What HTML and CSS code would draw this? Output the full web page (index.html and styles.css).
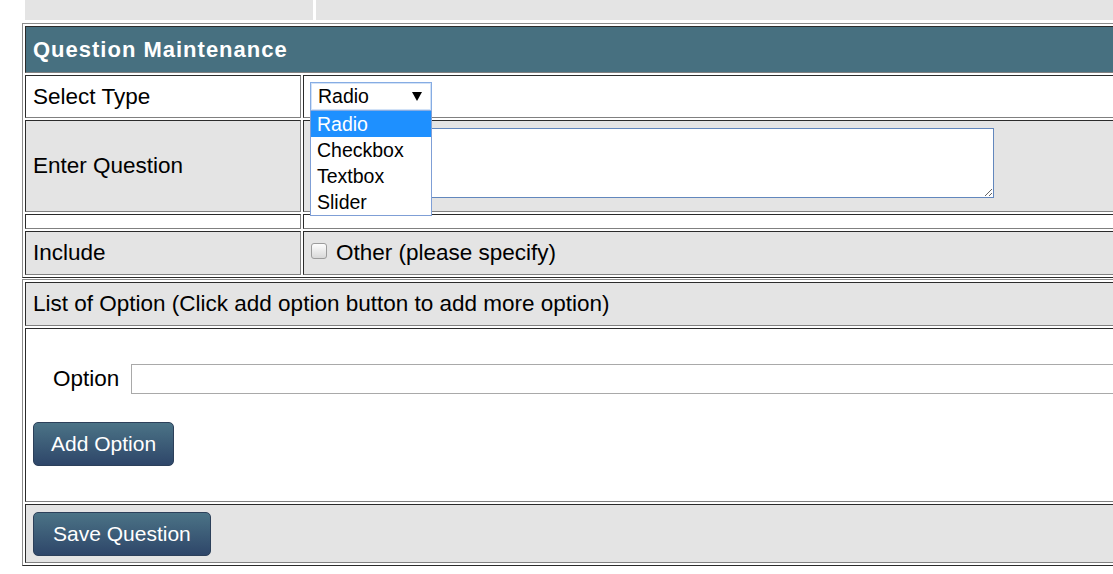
FILE: index.html
```html
<!DOCTYPE html>
<html>
<head>
<meta charset="utf-8">
<title>Question Maintenance</title>
<link rel="stylesheet" href="styles.css">
</head>
<body>
<div class="page">
  <div class="topstrip">
    <div class="strip-cell strip-left"></div>
    <div class="strip-cell strip-right"></div>
  </div>

  <div class="tbl tbl-main">
    <div class="cell header">Question Maintenance</div>

    <div class="cell label white">Select Type</div>
    <div class="cell value white">
      <div class="select-wrap">
        <div class="select"><span class="select-text">Radio</span><span class="arrow"></span></div>
        <ul class="dropdown">
          <li class="opt active">Radio</li>
          <li class="opt">Checkbox</li>
          <li class="opt">Textbox</li>
          <li class="opt">Slider</li>
        </ul>
      </div>
    </div>

    <div class="cell label gray">Enter Question</div>
    <div class="cell value gray top"><textarea class="question"></textarea></div>

    <div class="cell white"></div>
    <div class="cell white"></div>

    <div class="cell label gray">Include</div>
    <div class="cell value gray"><span class="checkbox"></span><span>Other (please specify)</span></div>
  </div>

  <div class="tbl tbl-options">
    <div class="cell label gray">List of Option (Click add option button to add more option)</div>
    <div class="cell white option-body">
      <div class="option-row">
        <span class="option-label">Option</span>
        <input class="option-input" type="text">
      </div>
      <button class="btn add-btn" type="button">Add Option</button>
    </div>
    <div class="cell gray save-cell">
      <button class="btn save-btn" type="button">Save Question</button>
    </div>
  </div>
</div>
</body>
</html>
```

FILE: styles.css
```css
html, body {
  margin: 0;
  padding: 0;
  background: #ffffff;
  overflow: hidden;
}

body {
  font-family: "Liberation Sans", Arial, sans-serif;
  color: #000000;
}

.page {
  width: 1113px;
  height: 574px;
  overflow: hidden;
  padding-left: 22px;
  box-sizing: border-box;
}

/* remnants of the table above */
.topstrip {
  display: flex;
  gap: 3px;
  margin-left: 3px;
  width: 1200px;
  height: 20px;
  margin-bottom: 3px;
}

.strip-cell {
  background: #e4e4e4;
}

.strip-left {
  width: 288px;
}

.strip-right {
  flex: 1;
}

/* table-like grids */
.tbl {
  display: grid;
  gap: 2px;
  padding: 2px;
  width: 1200px;
  box-sizing: border-box;
  border: 1px solid;
  border-color: #8c8c8c #2b2b2b #2b2b2b #8c8c8c;
}

.tbl-main {
  grid-template-columns: 276px 1fr;
  grid-template-rows: 47px 43px 92px 15px 44px;
}

.tbl-options {
  margin-top: 1px;
  grid-template-columns: 1fr;
  grid-template-rows: 44px 174px 59px;
}

.cell {
  box-sizing: border-box;
  border: 1px solid;
  border-color: #2b2b2b #808080 #808080 #2b2b2b;
  display: flex;
  align-items: center;
  font-size: 22.5px;
  min-width: 0;
  white-space: nowrap;
}

.white {
  background: #ffffff;
}

.gray {
  background: #e4e4e4;
}

.header {
  grid-column: 1 / -1;
  background: #477080;
  color: #ffffff;
  font-size: 22px;
  font-weight: bold;
  letter-spacing: 1px;
  padding-left: 7px;
}

.label {
  padding-left: 7px;
}

.value {
  padding-left: 6px;
}

.value.top {
  align-items: flex-start;
  padding-top: 7px;
}

/* fake open select */
.select-wrap {
  position: relative;
}

.select {
  box-sizing: border-box;
  width: 122px;
  height: 29px;
  border: 1px solid #86ace3;
  box-shadow: inset 0 0 0 1px #d2e2f7;
  background: #ffffff;
  display: flex;
  align-items: center;
  padding-left: 7px;
  font-size: 19.5px;
}

.arrow {
  margin-left: auto;
  margin-right: 9px;
  width: 0;
  height: 0;
  border-left: 5px solid transparent;
  border-right: 5px solid transparent;
  border-top: 9px solid #000000;
}

.dropdown {
  position: absolute;
  top: 100%;
  left: 0;
  z-index: 2;
  box-sizing: border-box;
  width: 122px;
  margin: 0;
  padding: 0;
  list-style: none;
  background: #ffffff;
  border: 1px solid #7f9fd6;
  border-top: none;
}

.opt {
  height: 26px;
  line-height: 26px;
  padding-left: 6px;
  font-size: 19.5px;
  color: #000000;
}

.opt.active {
  background: #1e90ff;
  color: #ffffff;
}

.question {
  box-sizing: border-box;
  width: 684px;
  height: 70px;
  margin: 0;
  border: 1px solid #6287bd;
  background: #ffffff;
  font-family: "Liberation Sans", Arial, sans-serif;
}

.checkbox {
  box-sizing: border-box;
  width: 16px;
  height: 16px;
  margin-left: 1px;
  margin-right: 9px;
  margin-top: -4px;
  border: 1px solid #9c9c9c;
  border-radius: 3px;
  background: linear-gradient(#fdfdfd, #d8d8d8);
}

/* options block */
.option-body {
  flex-direction: column;
  align-items: flex-start;
  padding: 35px 0 0 7px;
}

.option-row {
  display: flex;
  align-items: center;
  align-self: stretch;
  height: 30px;
  padding-left: 20px;
}

.option-label {
  margin-right: 12px;
}

.option-input {
  flex: 1;
  box-sizing: border-box;
  height: 30px;
  margin: 0;
  border: 1px solid #a9a9a9;
  background: #ffffff;
}

.btn {
  box-sizing: border-box;
  height: 44px;
  margin: 0;
  border: 1px solid #2c405a;
  border-radius: 5px;
  background: linear-gradient(#4b7386, #2e4669);
  color: #ffffff;
  font-family: "Liberation Sans", Arial, sans-serif;
  font-size: 21px;
}

.add-btn {
  margin-top: 28px;
  padding: 0 17px;
}

.save-btn {
  padding: 0 19px;
}

.save-cell {
  align-items: flex-start;
  padding: 7px 0 0 7px;
}
```
